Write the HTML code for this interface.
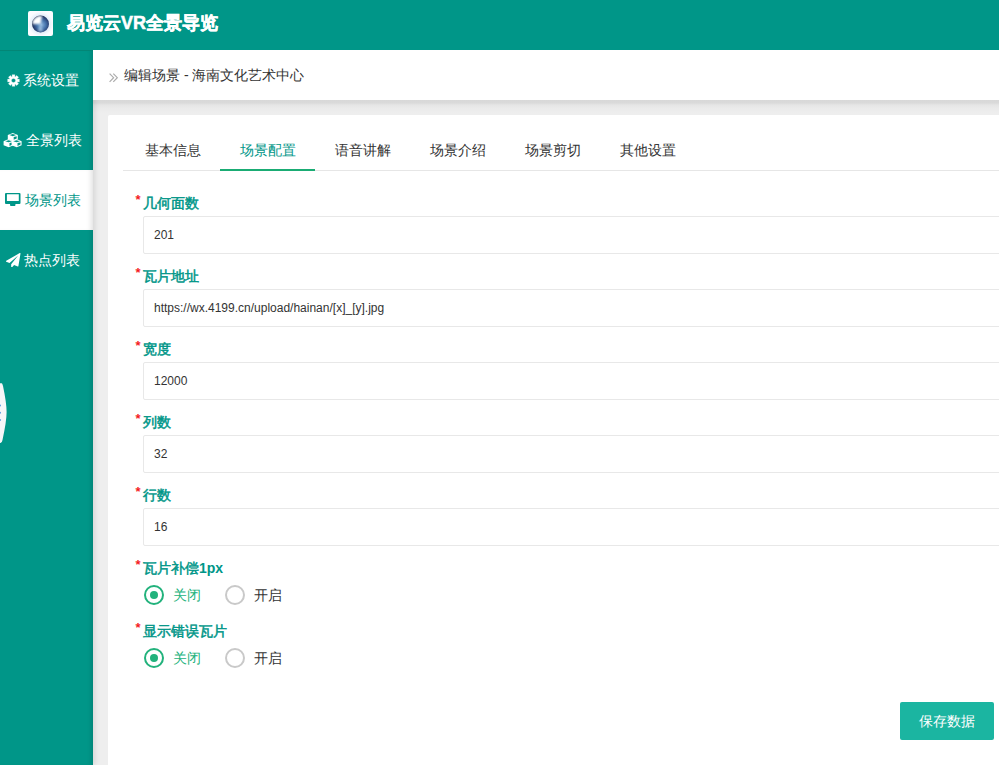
<!DOCTYPE html>
<html><head><meta charset="utf-8">
<style>
*{margin:0;padding:0;box-sizing:border-box}
html,body{width:999px;height:765px;overflow:hidden;background:#eeeeee;font-family:"Liberation Sans",sans-serif;}
.hdr{position:absolute;left:0;top:0;width:999px;height:50px;background:#009688;z-index:3}
.hline{position:absolute;left:0;top:50px;width:93px;height:1px;background:#038676;z-index:3}
.logo{position:absolute;left:28px;top:11px;}
.globe{position:absolute;left:4px;top:4.5px;width:17px;height:17px;border-radius:50%;
 background:radial-gradient(circle at 35% 30%,#ffffff 0,#cfe0f5 18%,#5f8fc8 40%,#2f5a9a 65%,#1a2f5a 100%);}
.title{position:absolute;left:67px;top:12px;font-size:18px;font-weight:bold;color:#fff;line-height:22px;white-space:nowrap;-webkit-text-stroke:0.5px #fff;}
.side{position:absolute;left:0;top:50px;width:93px;height:715px;background:#009688;box-shadow:inset -4px 0 4px -2px rgba(0,0,0,.12),2px 0 5px rgba(0,0,0,.10);z-index:1}
.side .it{position:absolute;left:0;width:93px;height:60px;color:#fff;font-size:14px;}
.side .it.act{background:#fff;color:#009688;box-shadow:inset -5px 0 5px -3px rgba(0,0,0,.12);}
.side .it span{position:absolute;top:21px;line-height:18px;white-space:nowrap;}
.side svg{position:absolute;}
.crumb{position:absolute;left:93px;top:50px;width:906px;height:50px;background:#fff;z-index:2}
.cshadow{position:absolute;left:93px;top:100px;width:906px;height:14px;background:linear-gradient(#d8d8d8 0,#dadada 3px,#e5e5e5 5px,#eaeaea 8px,#eeeeee 13px);z-index:0}
.crumb .arr{position:absolute;left:15.8px;top:23px;}
.crumb .txt{position:absolute;left:31px;top:16px;font-size:14px;color:#333;line-height:18px;white-space:nowrap;}
.card{position:absolute;left:108px;top:115px;width:900px;height:660px;background:#fff;border-radius:2px;}
.tabs{position:absolute;left:15px;top:15px;width:900px;height:41px;border-bottom:1px solid #e6e6e6;}
.tab{position:absolute;top:0;height:40px;width:95px;text-align:center;font-size:14px;line-height:40px;color:#333;}
.tab.act{color:#009688;}
.tab.act:after{content:"";position:absolute;left:0;bottom:-1px;width:95px;height:2px;background:#1aac74;}
.lbl{position:absolute;left:35px;font-size:14px;font-weight:normal;color:#009688;line-height:18px;white-space:nowrap;margin-top:-1px;-webkit-text-stroke:0.5px #009688;}
.lbl b{-webkit-text-stroke:0;}
.lbl i{position:absolute;left:-7.5px;top:-3px;font-style:normal;color:#f41c1c;font-weight:bold;font-size:13px;-webkit-text-stroke:0;}
.inp{position:absolute;left:35px;width:900px;height:38px;border:1px solid #e8e8e8;border-radius:2px;font-size:12px;color:#333;line-height:36px;padding-left:10px;}
.radio{position:absolute;height:20px;}
.radio .c{position:absolute;left:0;top:0;width:20px;height:20px;border-radius:50%;border:2px solid #c9c9c9;}
.radio.on .c{border-color:#22b27c;}
.radio.on .c:after{content:"";position:absolute;left:4px;top:4px;width:8px;height:8px;border-radius:50%;background:#22b27c;}
.radio span{position:absolute;left:29px;top:1px;font-size:14px;line-height:18px;color:#333;white-space:nowrap;}
.radio.on span{color:#22b27c;}
.btn{position:absolute;left:792px;top:587px;width:94px;height:38px;background:#1bb5a1;border-radius:2px;color:#fff;font-size:14px;line-height:39px;text-align:center;}
.ghost{position:absolute;left:0;top:383px;z-index:4}
</style></head><body>
<div class="hdr">
  <svg class="logo" width="25" height="25" viewBox="0 0 25 25"><defs>
<radialGradient id="gl" cx="50%" cy="52%" r="50%"><stop offset="0.5" stop-color="#d6e6f6"/><stop offset="1" stop-color="#fbfcff"/></radialGradient>
<radialGradient id="gb" cx="55%" cy="55%" r="55%"><stop offset="0" stop-color="#8ab4dc"/><stop offset="0.45" stop-color="#4a78b0"/><stop offset="0.8" stop-color="#2a4478"/><stop offset="1" stop-color="#18264a"/></radialGradient>
<filter id="bl" x="-50%" y="-50%" width="200%" height="200%"><feGaussianBlur stdDeviation="0.85"/></filter>
<clipPath id="cc"><circle cx="12.5" cy="13" r="8.5"/></clipPath>
</defs>
<rect x="0" y="0" width="25" height="25" rx="2" fill="url(#gl)"/>
<circle cx="12.5" cy="13" r="8.5" fill="url(#gb)"/>
<g clip-path="url(#cc)"><path d="M12.5 13 L4.30 13.00 A8.2 8.2 0 0 1 14.20 4.98Z" fill="#ffffff" filter="url(#bl)"/>
<path d="M12.5 13 L15.10 20.14 A7.6 7.6 0 0 1 9.65 20.05Z" fill="#b8d4ee" opacity="0.7" filter="url(#bl)"/></g>
</svg>
  <div class="title">易览云VR全景导览</div>
</div>
<div class="hline"></div>
<div class="side">
  <div class="it" style="top:0"><svg style="left:6.5px;top:23.9px" width="13" height="13" viewBox="0 0 13 13"><path fill="#fff" fill-rule="evenodd" stroke="#fff" stroke-width="0.3" stroke-linejoin="round" d="M10.59 5.17 L12.33 5.10 L12.33 7.90 L10.59 7.83 L10.33 8.45 L11.62 9.63 L9.63 11.62 L8.45 10.33 L7.83 10.59 L7.90 12.33 L5.10 12.33 L5.17 10.59 L4.55 10.33 L3.37 11.62 L1.38 9.63 L2.67 8.45 L2.41 7.83 L0.67 7.90 L0.67 5.10 L2.41 5.17 L2.67 4.55 L1.38 3.37 L3.37 1.38 L4.55 2.67 L5.17 2.41 L5.10 0.67 L7.90 0.67 L7.83 2.41 L8.45 2.67 L9.63 1.38 L11.62 3.37 L10.33 4.55Z M8.6 6.5 A2.1 2.1 0 1 0 4.4 6.5 A2.1 2.1 0 1 0 8.6 6.5Z"/></svg><span style="left:23px">系统设置</span></div>
  <div class="it" style="top:60px"><svg style="left:2px;top:22.9px" width="22" height="15" viewBox="0 0 22 15"><path fill="#fff" d="M5.8 2.1 L10.8 0 L15.8 2.1 L15.8 6.1 L10.8 8.2 L5.8 6.1Z"/><path fill="#009688" d="M7.4 2.1 L10.8 1.1 L14.200000000000001 2.1 L10.8 3.2Z M11.700000000000001 4.0 L14.700000000000001 3.3 L14.700000000000001 5.499999999999999 L11.700000000000001 6.799999999999999Z"/><path fill="#fff" d="M1.6 8.2 L6.6 6.1 L11.6 8.2 L11.6 12.2 L6.6 14.299999999999999 L1.6 12.2Z"/><path fill="#009688" d="M3.2 8.2 L6.6 7.199999999999999 L10.0 8.2 L6.6 9.3Z M7.5 10.1 L10.5 9.399999999999999 L10.5 11.599999999999998 L7.5 12.899999999999999Z"/><path fill="#fff" d="M9.6 8.2 L14.6 6.1 L19.6 8.2 L19.6 12.2 L14.6 14.299999999999999 L9.6 12.2Z"/><path fill="#009688" d="M11.2 8.2 L14.6 7.199999999999999 L18.0 8.2 L14.6 9.3Z M15.5 10.1 L18.5 9.399999999999999 L18.5 11.599999999999998 L15.5 12.899999999999999Z"/></svg><span style="left:26px">全景列表</span></div>
  <div class="it act" style="top:120px"><svg style="left:5.3px;top:22.7px" width="16" height="14" viewBox="0 0 16 14"><path fill="#009688" fill-rule="evenodd" d="M1 0 H14.5 Q15.5 0 15.5 1 V10.1 Q15.5 11.1 14.5 11.1 H1 Q0 11.1 0 10.1 V1 Q0 0 1 0Z M1.9 1.3 V8.1 H13.8 V1.3Z M5 11 H10.5 L10.3 12.5 Q10.2 13.1 9.5 13.1 H6 Q5.3 13.1 5.2 12.5Z"/></svg><span style="left:25px">场景列表</span></div>
  <div class="it" style="top:180px"><svg style="left:6px;top:23.2px" width="14.5" height="14.2" viewBox="0 0 1792 1750"><path fill="#fff" d="M1764 11q33 24 27 64l-257 1536q-5 29-32 45-14 8-31 8-11 0-24-5l-453-185-242 295q-18 23-49 23-13 0-22-4-19-7-30.5-23.5t-11.5-36.5v-349l864-1059-1069 925-395-162q-37-14-40-55-2-40 32-59l1664-960q15-9 32-9 20 0 36 11z"/></svg><span style="left:24px">热点列表</span></div>
  
</div>
<svg class="ghost" width="8" height="60" viewBox="0 0 8 60"><path d="M0 1 Q0 0 1 0 Q2.5 0 3 3 Q6.6 20 6.6 29 Q6.6 38 2.5 57 Q2 60 0.5 60 L0 60Z" fill="#f7f6f8"/><g fill="#5b9be0"><circle cx="0" cy="22.5" r="1"/><circle cx="0" cy="29.8" r="1"/><circle cx="0" cy="37" r="1"/></g></svg>
<div class="cshadow"></div>
<div class="crumb"><svg class="arr" width="10" height="10" viewBox="0 0 10 10"><path d="M0.6 0.6 L4.6 4.7 L0.6 8.8 M4.3 0.6 L8.3 4.7 L4.3 8.8" fill="none" stroke="#acacac" stroke-width="1.2"/></svg><span class="txt">编辑场景 - 海南文化艺术中心</span></div>
<div class="card">
  <div class="tabs">
    <div class="tab" style="left:2px">基本信息</div>
    <div class="tab act" style="left:97px">场景配置</div>
    <div class="tab" style="left:192px">语音讲解</div>
    <div class="tab" style="left:287px">场景介绍</div>
    <div class="tab" style="left:382px">场景剪切</div>
    <div class="tab" style="left:477px">其他设置</div>
  </div>
  <div class="lbl" style="top:80px"><i>*</i>几何面数</div>
  <div class="inp" style="top:101px">201</div>
  <div class="lbl" style="top:153px"><i>*</i>瓦片地址</div>
  <div class="inp" style="top:174px">https://wx.4199.cn/upload/hainan/[x]_[y].jpg</div>
  <div class="lbl" style="top:226px"><i>*</i>宽度</div>
  <div class="inp" style="top:247px">12000</div>
  <div class="lbl" style="top:299px"><i>*</i>列数</div>
  <div class="inp" style="top:320px">32</div>
  <div class="lbl" style="top:372px"><i>*</i>行数</div>
  <div class="inp" style="top:393px">16</div>
  <div class="lbl" style="top:445px"><i>*</i>瓦片补偿<b>1px</b></div>
  <div class="radio on" style="left:36px;top:470px"><div class="c"></div><span>关闭</span></div>
  <div class="radio" style="left:117px;top:470px"><div class="c"></div><span>开启</span></div>
  <div class="lbl" style="top:508px"><i>*</i>显示错误瓦片</div>
  <div class="radio on" style="left:36px;top:533px"><div class="c"></div><span>关闭</span></div>
  <div class="radio" style="left:117px;top:533px"><div class="c"></div><span>开启</span></div>
  <div class="btn">保存数据</div>
</div>
</body></html>
